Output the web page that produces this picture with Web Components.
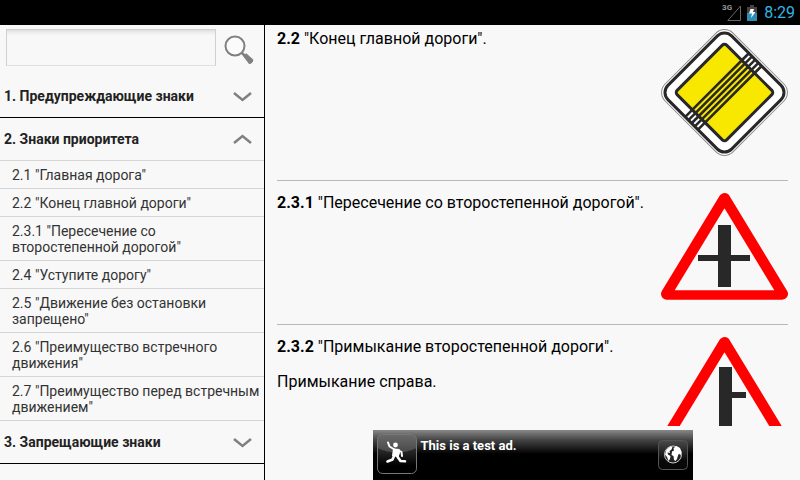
<!DOCTYPE html>
<html lang="ru">
<head>
<meta charset="utf-8">
<meta name="viewport" content="width=device-width, initial-scale=1">
<title>Дорожные знаки</title>
<style>
  body {
    margin: 0;
    font-family: Roboto, "Liberation Sans", sans-serif;
    background: #f8f8f8;
  }
</style>
</head>
<body>
<signs-app>
  <status-bar slot="status" network="3G" time="8:29"></status-bar>

  <search-box slot="sidebar"></search-box>
  <sign-group slot="sidebar" heading="1. Предупреждающие знаки"></sign-group>
  <sign-group slot="sidebar" heading="2. Знаки приоритета" open>
    <sign-link href="#2.1">2.1 "Главная дорога"</sign-link>
    <sign-link href="#2.2">2.2 "Конец главной дороги"</sign-link>
    <sign-link href="#2.3.1">2.3.1 "Пересечение со второстепенной дорогой"</sign-link>
    <sign-link href="#2.4">2.4 "Уступите дорогу"</sign-link>
    <sign-link href="#2.5">2.5 "Движение без остановки запрещено"</sign-link>
    <sign-link href="#2.6">2.6 "Преимущество встречного движения"</sign-link>
    <sign-link href="#2.7">2.7 "Преимущество перед встречным движением"</sign-link>
  </sign-group>
  <sign-group slot="sidebar" heading="3. Запрещающие знаки"></sign-group>

  <sign-article number="2.2" name="Конец главной дороги" sign="main-road-end"></sign-article>
  <sign-article number="2.3.1" name="Пересечение со второстепенной дорогой" sign="crossing"></sign-article>
  <sign-article number="2.3.2" name="Примыкание второстепенной дороги" sign="junction-right">Примыкание справа.</sign-article>

  <ad-banner slot="ad">This is a test ad.</ad-banner>
</signs-app>

<script>
class SignsApp extends HTMLElement {
  constructor() {
    super();
    this.attachShadow({ mode: 'open' }).innerHTML = `
      <style>
        :host {
          display: flex;
          flex-direction: column;
          height: 100vh;
          overflow: hidden;
          background: #f8f8f8;
        }
        .columns {
          display: flex;
          flex: 1;
          min-height: 0;
        }
        nav {
          flex: 0 0 33%;
          border-right: 1px solid #000;
          overflow: hidden;
        }
        .content {
          display: flex;
          flex: 1;
          flex-direction: column;
          min-width: 0;
        }
        main {
          flex: 1;
          min-height: 0;
          padding: 4px 12px 0;
          overflow: hidden;
        }
      </style>
      <slot name="status"></slot>
      <div class="columns">
        <nav><slot name="sidebar"></slot></nav>
        <div class="content">
          <main><slot></slot></main>
          <slot name="ad"></slot>
        </div>
      </div>
    `;
  }
}

class StatusBar extends HTMLElement {
  constructor() {
    super();
    this.attachShadow({ mode: 'open' });
  }

  connectedCallback() {
    this.shadowRoot.innerHTML = `
      <style>
        :host {
          display: flex;
          align-items: center;
          justify-content: flex-end;
          height: 25px;
          padding-right: 5px;
          background: #000;
          color: #33b5e5;
          font-size: 16px;
        }
        .network {
          align-self: flex-start;
          margin-top: 3px;
          color: #999;
          font-size: 8px;
          font-weight: bold;
          line-height: 10px;
        }
        .signal { margin-left: -5px; }
        .battery { margin: 0 7px 0 6px; }
      </style>
      <span class="network">${this.getAttribute('network')}</span>
      <svg class="signal" width="14" height="16" viewBox="0 0 14 16">
        <path d="M13.500 1v14.500H.8z" fill="none" stroke="#666"/>
      </svg>
      <svg class="battery" width="10" height="16" viewBox="0 0 10 16">
        <path d="M3 0h4v2h3v6H0V2h3z" fill="#444"/>
        <path d="M0 8h10v8H0z" fill="#2d8fb5"/>
        <path d="M3.500 4h3.500L6 7h2.500L4 13l1-4.500H2z" fill="#fff"/>
      </svg>
      <time>${this.getAttribute('time')}</time>
    `;
  }
}

class SearchBox extends HTMLElement {
  constructor() {
    super();
    this.attachShadow({ mode: 'open' }).innerHTML = `
      <style>
        :host { display: block; }
        form {
          display: flex;
          align-items: flex-start;
          gap: 8px;
          height: 46px;
          padding: 4px 10px 0 6px;
        }
        input {
          flex: 1;
          min-width: 0;
          height: 37px;
          box-sizing: border-box;
          padding: 4px 8px;
          border: 1px solid #d0d0d0;
          border-bottom-color: #e0e0e0;
          border-radius: 0;
          outline: none;
          background: linear-gradient(#dedede, #f0f0f0 3px, #f8f8f8 6px);
          font: 16px Roboto, sans-serif;
        }
        button {
          padding: 5px 0 0;
          border: 0;
          background: none;
        }
        svg { display: block; }
      </style>
      <form role="search">
        <input type="text" aria-label="Поиск">
        <button type="button" aria-label="Найти">
          <svg width="30" height="31" viewBox="0 0 30 31">
            <circle cx="11" cy="12" r="9.500" fill="#fbfbfb" stroke="#808080" stroke-width="2"/>
            <path d="M17.500 18.500l4 4" stroke="#808080" stroke-width="2.500"/>
            <path d="M19.200 22.200l3-3 7 6.300-.2 2-2 2.200-2 .2z" fill="#808080"/>
          </svg>
        </button>
      </form>
    `;
  }
}

class SignGroup extends HTMLElement {
  constructor() {
    super();
    this.attachShadow({ mode: 'open' });
  }

  static get observedAttributes() {
    return ['open'];
  }

  attributeChangedCallback() {
    this.render();
  }

  connectedCallback() {
    this.render();
  }

  render() {
    const open = this.hasAttribute('open');
    const arrow = open ? 'M1 9l8.500-7L18 9' : 'M1 2l8.500 7L18 2';

    this.shadowRoot.innerHTML = `
      <style>
        :host { display: block; }
        button {
          display: flex;
          align-items: center;
          justify-content: space-between;
          width: 100%;
          height: 43px;
          padding: 0 12px 0 4px;
          border: 0;
          border-bottom: 1px solid ${open ? '#d4d4d4' : '#000'};
          background: none;
          color: #222;
          font: bold 14px Roboto, sans-serif;
          text-align: left;
        }
      </style>
      <button type="button" aria-expanded="${open}">
        <span>${this.getAttribute('heading')}</span>
        <svg width="19" height="11" viewBox="0 0 19 11">
          <path d="${arrow}" fill="none" stroke="#808080" stroke-width="2.500"/>
        </svg>
      </button>
      ${open ? '<slot></slot>' : ''}
    `;
    this.shadowRoot.querySelector('button').addEventListener('click', () => {
      this.toggleAttribute('open');
    });
  }
}

class SignLink extends HTMLElement {
  constructor() {
    super();
    this.attachShadow({ mode: 'open' });
  }

  connectedCallback() {
    this.shadowRoot.innerHTML = `
      <style>
        :host {
          display: block;
          border-bottom: 1px solid #d4d4d4;
        }
        a {
          display: block;
          padding: 6px 2px 5px 12px;
          color: #333;
          font-size: 14px;
          line-height: 16px;
          text-decoration: none;
        }
      </style>
      <a href="${this.getAttribute('href')}"><slot></slot></a>
    `;
  }
}

const triangle = `
  <path d="M63.500 5.700L121.300 101H5.700z" fill="#f00" stroke="#f00" stroke-width="11.400" stroke-linejoin="round"/>
  <path d="M63.500 15.300L113.300 97.300H13.700z" fill="#f8f8f8"/>
`;

const signs = {
  'main-road-end': {
    height: 127,
    art: `
      <g transform="translate(63.500 63.500) rotate(45)">
        <rect x="-48" y="-48" width="96" height="96" rx="12" fill="#fff" stroke="#888"/>
        <rect x="-45" y="-45" width="90" height="90" rx="10" fill="#fff" stroke="#282828" stroke-width="3"/>
        <rect x="-35" y="-35" width="70" height="70" rx="3" fill="#f8e800" stroke="#282828" stroke-width="3"/>
        <path d="M-10.500 -45v90M-6 -45v90M-1.500 -45v90M3 -45v90M7.500 -45v90" stroke="#282828" stroke-width="2.600"/>
      </g>`
  },
  'crossing': {
    height: 107,
    art: triangle + `
      <path d="M57 32h13v30h19v6H70v26H57V68H37v-6h20z" fill="#282828"/>`
  },
  'junction-right': {
    height: 107,
    art: triangle + `
      <path d="M58 30h13v25h14v6H71v33H58z" fill="#282828"/>`
  }
};

class SignArticle extends HTMLElement {
  constructor() {
    super();
    this.attachShadow({ mode: 'open' });
  }

  connectedCallback() {
    const number = this.getAttribute('number');
    const sign = signs[this.getAttribute('sign')];

    this.shadowRoot.innerHTML = `
      <style>
        :host {
          display: block;
          margin-bottom: 12px;
          border-bottom: 1px solid #b8b8b8;
          color: #000;
          font-size: 16px;
          line-height: 19px;
        }
        article {
          display: flex;
          align-items: flex-start;
          gap: 12px;
          padding-bottom: 24px;
        }
        .text {
          flex: 1;
        }
        p {
          margin: 0 0 16px;
        }
        svg {
          flex: none;
        }
      </style>
      <article id="${number}">
        <div class="text">
          <p><b>${number}</b> "${this.getAttribute('name')}".</p>
          <p><slot></slot></p>
        </div>
        <svg width="127" height="${sign.height}" viewBox="0 0 127 ${sign.height}">${sign.art}</svg>
      </article>
    `;
  }
}

class AdBanner extends HTMLElement {
  constructor() {
    super();
    this.attachShadow({ mode: 'open' }).innerHTML = `
      <style>
        :host {
          display: block;
          align-self: center;
          width: 100%;
          max-width: 320px;
          margin-top: 4px;
        }
        a {
          display: flex;
          align-items: flex-start;
          gap: 4px;
          height: 50px;
          box-sizing: border-box;
          padding: 4px 5px 4px 4px;
          background: linear-gradient(#888, #444 10px, #000 24px);
          color: #fff;
          font-size: 13px;
          font-weight: bold;
          line-height: 15px;
          text-decoration: none;
        }
        .text {
          flex: 1;
          padding-top: 4px;
        }
        .globe {
          align-self: center;
        }
      </style>
      <a href="#ad">
        <svg width="40" height="40" viewBox="0 0 40 40">
          <defs>
            <linearGradient id="gloss" x2="0" y2="1">
              <stop offset="0" stop-color="#6a6a6a"/>
              <stop offset="1" stop-color="#484848"/>
            </linearGradient>
            <linearGradient id="base" x2="0" y2="1">
              <stop offset=".3" stop-color="#333"/>
              <stop offset=".8" stop-color="#000"/>
            </linearGradient>
          </defs>
          <rect x=".5" y=".5" width="39" height="39" rx="5" fill="url(#base)"/>
          <path d="M.5 14V5.500a5 5 0 0 1 5-5h29a5 5 0 0 1 5 5V14Q20 23 .5 14z" fill="url(#gloss)"/>
          <rect x=".5" y=".5" width="39" height="39" rx="5" fill="none" stroke="#777"/>
          <circle cx="18.500" cy="11" r="2.400" fill="#fff"/>
          <path d="M11 8.500l1.500 4 5 3M21 16l3.500 2 .5 4" fill="none" stroke="#fff" stroke-width="2" stroke-linecap="round" stroke-linejoin="round"/>
          <path d="M16 14.500l6.500.5.500 4-1.500 4-6.500-1z" fill="#fff"/>
          <path d="M17 22l-1.500 3.500-5 2M20 22l3.500 5 4.500.3" fill="none" stroke="#fff" stroke-width="2.600" stroke-linecap="round" stroke-linejoin="round"/>
        </svg>
        <span class="text"><slot></slot></span>
        <svg class="globe" width="30" height="30" viewBox="0 0 30 30">
          <defs>
            <linearGradient id="plate" x2="0" y2="1">
              <stop offset="0" stop-color="#4a4a4a"/>
              <stop offset=".7" stop-color="#080808"/>
            </linearGradient>
          </defs>
          <rect x=".5" y=".5" width="29" height="29" rx="4" fill="url(#plate)" stroke="#555"/>
          <circle cx="15" cy="14.500" r="8.500" fill="#222" stroke="#ccc"/>
          <path d="M8.500 9.500l4-3 2 .5-1 2.500-2 1.500.5 2-2.500-.5.500 2 2.500 1.500-.5 3-1.500 2-1.500-4-2-2.500z" fill="#fff"/>
          <path d="M15.500 8l3-2 3.500 2 1.500 4-1 3.500-1.500-2-1 2-1 3.500-1.500 2-1.500-1-.5-4-2-1 .5-3.500 2-1z" fill="#fff"/>
        </svg>
      </a>
    `;
  }
}

customElements.define('signs-app', SignsApp);
customElements.define('status-bar', StatusBar);
customElements.define('search-box', SearchBox);
customElements.define('sign-group', SignGroup);
customElements.define('sign-link', SignLink);
customElements.define('sign-article', SignArticle);
customElements.define('ad-banner', AdBanner);
</script>
</body>
</html>
